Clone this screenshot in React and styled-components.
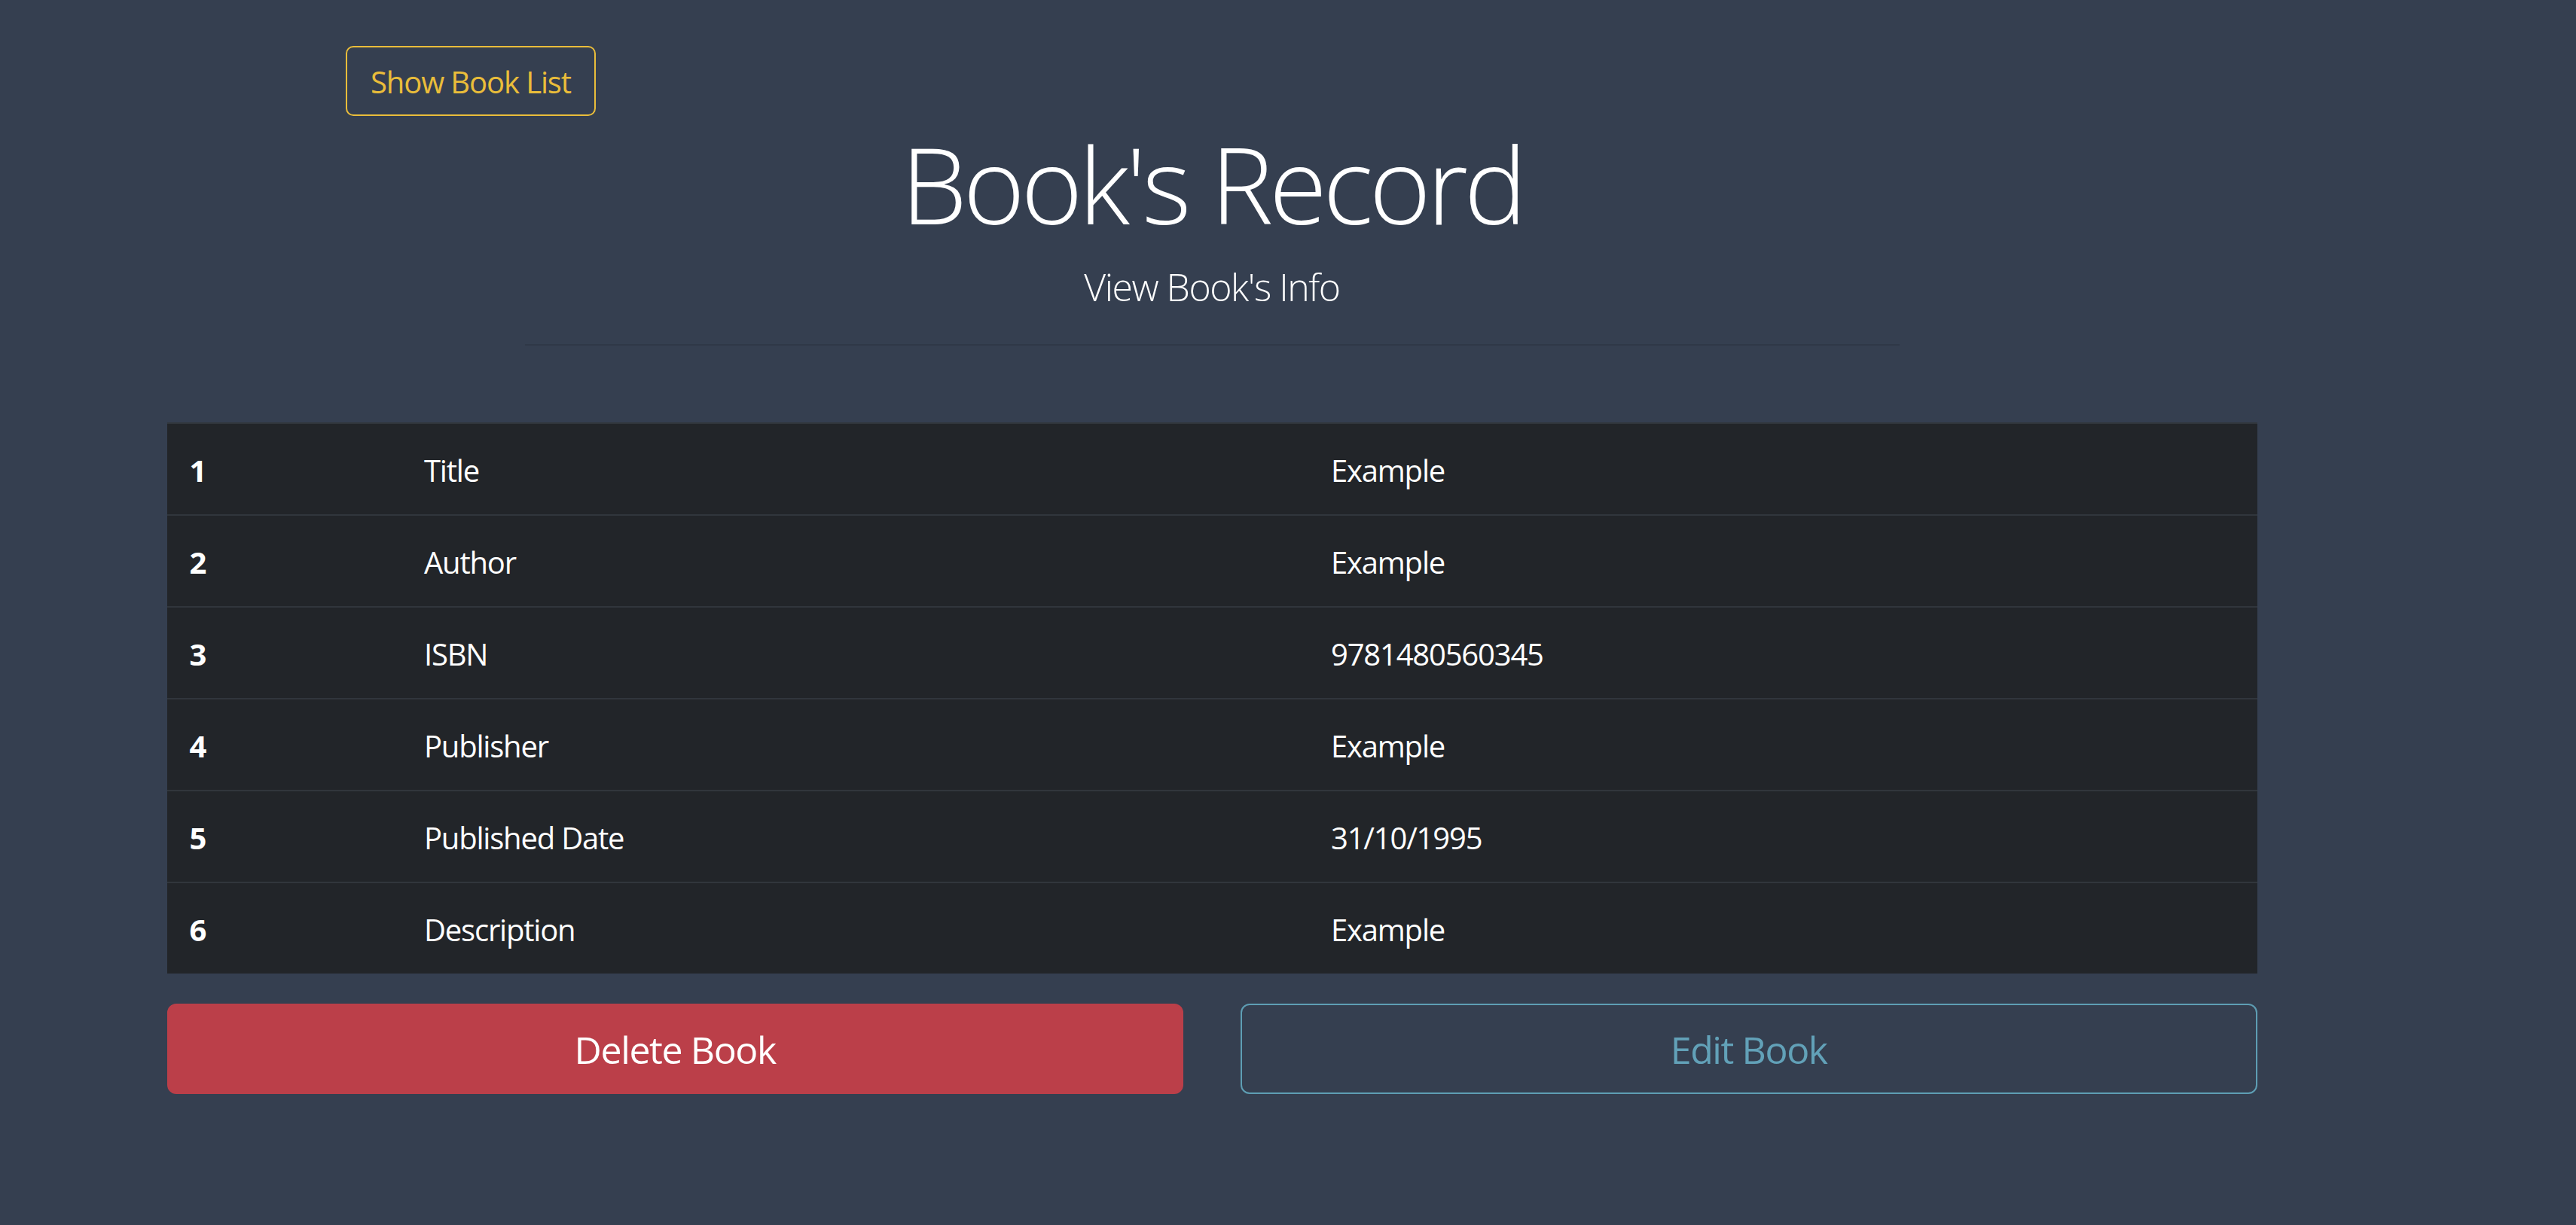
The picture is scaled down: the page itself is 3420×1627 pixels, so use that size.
import React from "react";
import styled, { createGlobalStyle } from "styled-components";

const FONT = `"Open Sans", "Noto Sans", "Liberation Sans", sans-serif`;

const GlobalStyle = createGlobalStyle`
  html, body {
    margin: 0;
    padding: 0;
    background: #353f50;
  }
  body {
    font-family: ${FONT};
    color: #ffffff;
  }
  * { box-sizing: border-box; }
`;

const Page = styled.div`
  min-height: 1627px;
  background: #353f50;
  padding-top: 61px;
`;

const Container = styled.div`
  width: 2850px;
  margin-left: 184px;
  padding: 0 37.5px;
`;

const TopBar = styled.div`
  display: flex;
  padding-left: 237.5px;
`;

const OutlineButton = styled.a`
  display: inline-flex;
  align-items: center;
  justify-content: center;
  width: 332px;
  height: 93px;
  padding-top: 2px;
  border: 2.5px solid #eabd3a;
  border-radius: 10px;
  color: #eabd3a;
  font-family: ${FONT};
  font-size: 40px;
  line-height: 60px;
  letter-spacing: -0.028em;
  text-decoration: none;
`;

const Header = styled.div`
  width: 1825px;
  margin: 6px auto 0;
  display: flex;
  flex-direction: column;
  align-items: center;
`;

const Title = styled.h1`
  margin: 0 0 16px;
  font-family: ${FONT};
  font-weight: 300;
  font-size: 140px;
  line-height: 168px;
  letter-spacing: -0.038em;
  color: #ffffff;
`;

const Lead = styled.p`
  margin: 0 0 38px;
  font-family: ${FONT};
  font-weight: 300;
  font-size: 50px;
  line-height: 75px;
  letter-spacing: -0.03em;
  color: #ffffff;
`;

const Rule = styled.hr`
  width: 100%;
  margin: 0;
  border: 0;
  border-top: 2px solid rgba(0, 0, 0, 0.1);
`;

const Table = styled.div`
  margin-top: 102px;
  background: #222529;
  border-top: 2px solid #31363c;
`;

const Row = styled.div`
  display: grid;
  grid-template-columns: 311.5px 1204px 1fr;
  border-top: ${(p) => (p.$first ? "0" : "2px solid #31363c")};
`;

const Cell = styled.div`
  padding: 32px 30px 28px;
  font-family: ${FONT};
  font-size: 40px;
  line-height: 60px;
  letter-spacing: -0.03em;
  font-weight: ${(p) => (p.$head ? 700 : 400)};
  color: #ffffff;
`;

const Actions = styled.div`
  display: grid;
  grid-template-columns: 1fr 1fr;
  column-gap: 76px;
  margin-top: 40px;
`;

const BigButton = styled.button`
  height: 120px;
  padding-top: 4px;
  border-radius: 12px;
  font-family: ${FONT};
  font-size: 50px;
  line-height: 75px;
  letter-spacing: -0.028em;
  cursor: pointer;
  border: 2.5px solid ${(p) => (p.$variant === "danger" ? "#bb3f49" : "#5e9eb4")};
  background: ${(p) => (p.$variant === "danger" ? "#bb3f49" : "transparent")};
  color: ${(p) => (p.$variant === "danger" ? "#ffffff" : "#62a1b8")};
`;

const rows = [
  ["1", "Title", "Example"],
  ["2", "Author", "Example"],
  ["3", "ISBN", "9781480560345"],
  ["4", "Publisher", "Example"],
  ["5", "Published Date", "31/10/1995"],
  ["6", "Description", "Example"],
];

export default function App() {
  return (
    <>
      <GlobalStyle />
      <Page>
        <Container>
          <TopBar>
            <OutlineButton href="#">Show Book List</OutlineButton>
          </TopBar>
          <Header>
            <Title>Book's Record</Title>
            <Lead>View Book's Info</Lead>
            <Rule />
          </Header>
          <Table>
            {rows.map((r, i) => (
              <Row key={r[0]} $first={i === 0}>
                <Cell $head>{r[0]}</Cell>
                <Cell>{r[1]}</Cell>
                <Cell>{r[2]}</Cell>
              </Row>
            ))}
          </Table>
          <Actions>
            <BigButton $variant="danger">Delete Book</BigButton>
            <BigButton $variant="info">Edit Book</BigButton>
          </Actions>
        </Container>
      </Page>
    </>
  );
}
